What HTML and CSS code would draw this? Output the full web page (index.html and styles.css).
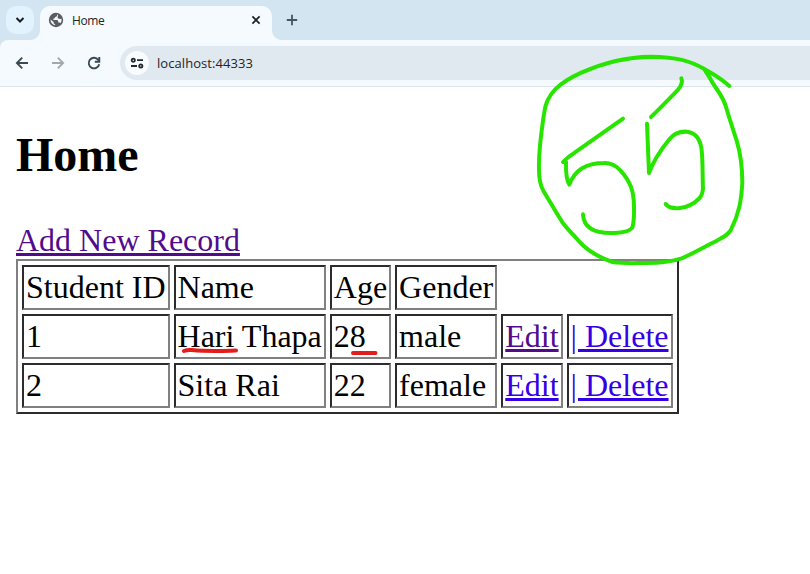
FILE: index.html
```html
<!DOCTYPE html>
<html lang="en">
<head>
<meta charset="utf-8">
<title>Home</title>
<link rel="stylesheet" href="styles.css">
</head>
<body>
<header class="browser">
  <div class="tabstrip">
    <button class="tab-search" aria-label="Search tabs"><svg width="28" height="28" viewBox="0 0 28 28"><path d="M10.500 12 14 15.500l3.500-3.500" fill="none" stroke="#1b1f23" stroke-width="2"/></svg></button>
    <div class="tab">
      <svg class="globe" width="16" height="16" viewBox="0 0 16 16"><circle cx="8" cy="8" r="7.200" fill="#5a5e63"/><path d="M9 2.500c.3 1.500-.3 2.300-1.800 2.400-.3 1.300-.7 1.600-1.800 1.700v1.400h3.300c1 0 1.500.6 1.500 1.500v.9h1.300c.7 0 .9.300 1.100.7 1-1.600 1.200-3.200.7-4.700-.8.7-1.500.6-2.200.4-1-.2-1.600-.8-1.400-1.800L10 2.700zM2.500 7.600c-.1 2.900 1.800 5.200 4.600 5.700v-1.200c-1 0-1.500-.6-1.500-1.500v-.7z" fill="#f5fafe"/></svg>
      <span class="tab-title">Home</span>
      <svg class="close" width="10" height="10" viewBox="0 0 10 10"><path d="m1.400 1.400 7.200 7.200m0-7.200L1.400 8.600" stroke="#1b1f23" stroke-width="1.700"/></svg>
    </div>
    <svg class="new-tab" width="12" height="12" viewBox="0 0 12 12"><path d="M6 .8v10.400M.8 6h10.400" stroke="#46565f" stroke-width="1.800"/></svg>
  </div>
  <div class="toolbar">
    <svg class="nav" width="16" height="16" viewBox="0 0 16 16"><path d="M14 8H3.500M8.200 2.700 2.900 8l5.300 5.300" fill="none" stroke="#3b4a53" stroke-width="1.900"/></svg>
    <svg class="nav" width="16" height="16" viewBox="0 0 16 16"><path d="M2 8h10.500M7.800 2.700 13.100 8l-5.300 5.300" fill="none" stroke="#a3a8ab" stroke-width="1.900"/></svg>
    <svg class="nav" width="16" height="16" viewBox="0 0 16 16"><path d="M13.200 9.200A5.300 5.300 0 1 1 12.300 4.900L13.500 6.200M13.300 2v4.700H8.800" fill="none" stroke="#3b4a53" stroke-width="1.900"/></svg>
    <div class="address">
      <span class="site-info"><svg width="14" height="14" viewBox="0 0 14 14" fill="none" stroke="#24292d" stroke-width="1.800"><circle cx="3.300" cy="4.200" r="1.600"/><path d="M7 4.200h6M1 10h6"/><circle cx="10.800" cy="10" r="1.600"/></svg></span>
      <span class="url">localhost:44333</span>
    </div>
  </div>
</header>
<main class="page">
  <h2>Home</h2>
  <a class="visited" href="#">Add New Record</a>
  <table>
    <tr><td>Student ID</td><td>Name</td><td>Age</td><td>Gender</td></tr>
    <tr><td>1</td><td>Hari Thapa</td><td>28</td><td>male</td><td><a class="visited" href="#">Edit</a></td><td><a href="#">| Delete</a></td></tr>
    <tr><td>2</td><td>Sita Rai</td><td>22</td><td>female</td><td><a href="#">Edit</a></td><td><a href="#">| Delete</a></td></tr>
  </table>
</main>
<svg class="ink" width="810" height="574" viewBox="0 0 810 574">
  <g class="green" transform="translate(530 40) scale(.33333)">
    <path d="M598 138C570 112 549 102 523 87C480 62 440 51 362 50C290 51 220 68 154 98C90 127 48 160 42 222C35 270 25 330 27 390C27 420 30 434 40 452C60 485 78 518 98 548C114 569 130 584 148 605C175 635 215 655 250 667C285 671 320 669 350 669C400 669 425 665 455 655C480 645 515 625 545 610C575 594 592 588 602 571C628 520 634 480 637 428C637 380 633 345 620 302C608 264 597 232 589 204C577 162 560 152 543 120C535 105 528 97 523 87"/>
    <path d="M279 236 134 338Q115 349 99 366H108Q107 418 118 434C133 393 165 369 222 369Q250 368 271 391C301 424 312 453 312 501Q313 538 308 560Q302 577 251 579C190 581 161 562 159 523"/>
    <path d="M454 115Q460 130 445 148C416 178 390 205 363 231M351 251 357 399C372 358 394 327 417 299C434 277 452 274 470 275C496 277 508 293 514 322C519 360 517 400 519 445Q518 465 506 477Q483 500 450 504C430 506 416 505 407 492"/>
  </g>
  <g class="red"><path d="M184 351Q187 349.600 192 350C208 351.500 218 351 236 350.500M353 353h22.500"/></g>
</svg>
</body>
</html>
```
FILE: styles.css
```css
body {
  margin: 0;
  background: #fff;
  overflow: hidden;
}

.browser {
  font-family: "Open Sans", "Noto Sans", sans-serif;
  color: #1f2427;
  background: #d3e5f1;
}

.tabstrip {
  display: flex;
  align-items: flex-start;
  box-sizing: border-box;
  height: 40px;
  padding: 6px 6px 0;
}

.tab-search {
  width: 28px;
  height: 28px;
  padding: 0;
  border: 0;
  border-radius: 10px;
  background: #e2f3fe;
}

.tab-search svg {
  display: block;
}

.tab {
  position: relative;
  display: flex;
  align-items: center;
  box-sizing: border-box;
  width: 232px;
  height: 34px;
  margin-left: 6px;
  padding: 0 11px 6px 8px;
  border-radius: 10px 10px 0 0;
  background: #f5fafe;
}

.tab::before,
.tab::after {
  content: "";
  position: absolute;
  bottom: 0;
  width: 10px;
  height: 10px;
}

.tab::before {
  right: 100%;
  background: radial-gradient(circle at 0 0, transparent 9.5px, #f5fafe 10.5px);
}

.tab::after {
  left: 100%;
  background: radial-gradient(circle at 100% 0, transparent 9.5px, #f5fafe 10.5px);
}

.tab-title {
  flex: 1;
  margin-left: 8px;
  font-size: 12px;
  letter-spacing: -0.4px;
}

.new-tab {
  margin: 8px 0 0 14px;
}

.toolbar {
  display: flex;
  align-items: center;
  gap: 20px;
  box-sizing: border-box;
  height: 47px;
  padding-left: 14px;
  border-bottom: 1px solid #dce5eb;
  border-top-left-radius: 8px;
  background: #f5fafe;
}

.nav {
  flex: none;
}

.address {
  display: flex;
  flex: 1;
  align-items: center;
  height: 34px;
  margin-left: -2px;
  padding-left: 5px;
  border-radius: 17px 0 0 17px;
  background: #dfe9ef;
}

.site-info {
  display: flex;
  align-items: center;
  justify-content: center;
  width: 24px;
  height: 24px;
  border-radius: 50%;
  background: #f8fcff;
}

.url {
  margin-left: 8px;
  font-size: 13px;
  letter-spacing: 0.06px;
}

.page {
  padding: 0 16px;
  font: 32px "Liberation Serif", "Times New Roman", serif;
  color: #000;
}

h2 {
  margin: 0;
  padding: 40px 0;
  font-size: 48px;
  line-height: 55px;
}

a {
  color: #3500e8;
  text-decoration-thickness: 3px;
  text-underline-offset: 2px;
}

.visited {
  color: #520c8b;
}

table {
  border: 2px solid;
  border-color: #808080 #2c2c2c #2c2c2c #808080;
  border-spacing: 4px;
}

td {
  padding: 2px;
  border: 2px solid;
  border-color: #2c2c2c #808080 #808080 #2c2c2c;
}

.ink {
  position: absolute;
  top: 0;
  left: 0;
  fill: none;
  stroke-linecap: round;
  stroke-linejoin: round;
  pointer-events: none;
}

.green {
  stroke: #28e500;
  stroke-width: 12px;
}

.red {
  stroke: #e51c1c;
  stroke-width: 4px;
}
```
